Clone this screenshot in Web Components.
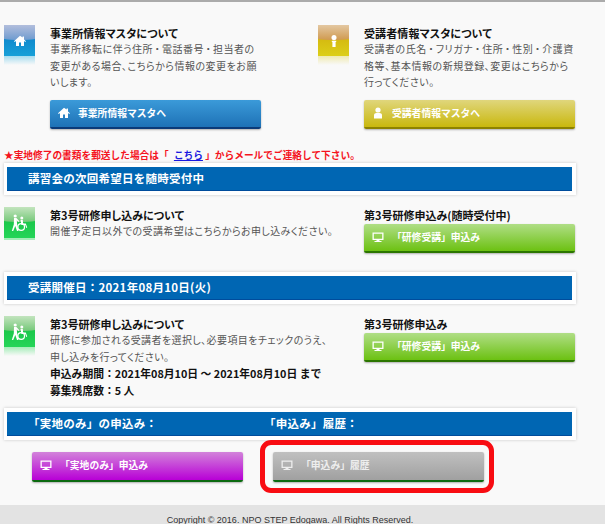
<!DOCTYPE html>
<html lang="ja">
<head>
<meta charset="utf-8">
<title>研修申込み</title>
<style>
html, body { margin: 0; overflow: hidden; height: 524px; }
body { background: #f9f9f9; font-family: "Noto Sans CJK JP", "Liberation Sans", sans-serif; }
</style>
</head>
<body>
<x-page>
  <x-masters>
    <x-info tile="blue" icon="home" heading="事業所情報マスタについて">
      事業所移転に伴う住所<i>・</i>電話番号<i>・</i>担当者の<br>変更がある場合、こちらから情報の変更をお願<br>いします。
      <x-btn slot="action" color="blue" icon="home">事業所情報マスタへ</x-btn>
    </x-info>
    <x-info tile="yellow" icon="figure" heading="受講者情報マスタについて">
      受講者の氏名<i>・</i>フリガナ<i>・</i>住所<i>・</i>性別<i>・</i>介護資<br>格等、基本情報の新規登録、変更はこちらから<br>行ってください。
      <x-btn slot="action" color="yellow" icon="person">受講者情報マスタへ</x-btn>
    </x-info>
  </x-masters>

  <x-notice>★実地修了の書類を郵送した場合は「 <a href="#">こちら</a> 」からメールでご連絡して下さい。</x-notice>

  <x-banner><span>講習会の次回希望日を随時受付中</span></x-banner>

  <x-course heading="第3号研修申し込みについて" short aside="第3号研修申込み(随時受付中)" style="height:65px">
    開催予定日以外での受講希望はこちらからお申し込みください。
  </x-course>

  <x-banner><span>受講開催日：2021年08月10日(火)</span></x-banner>

  <x-course heading="第3号研修申し込みについて" aside="第3号研修申込み" style="height:92px">
    研修に参加される受講者を選択し、必要項目をチェックのうえ、<br>申し込みを行ってください。
    <div slot="extra">申込み期間：2021年08月10日 ～ 2021年08月10日 まで</div>
    <div slot="extra">募集残席数：5 人</div>
  </x-course>

  <x-banner columns><span>「実地のみ」の申込み：</span><span>「申込み」履歴：</span></x-banner>

  <x-actions>
    <x-btn color="purple" icon="monitor">「実地のみ」申込み</x-btn>
    <x-highlight><x-btn color="gray" icon="monitor">「申込み」履歴</x-btn></x-highlight>
  </x-actions>

  <x-footer>Copyright © 2016. NPO STEP Edogawa. All Rights Reserved.</x-footer>
</x-page>

<script>
const ICONS = {
    home: '<path d="M6 .8 0 6.2l.8.9L2 6v5h3V7.6h2V11h3V6l1.200 1.100.8-.9-2-1.800V1.500H8.600v1.100z"/>',
    person: '<circle cx="6" cy="3" r="2.600"/><path d="M2 11.500V8.300C2 6.800 3.200 6 4.500 6h3C8.800 6 10 6.800 10 8.300v3.200z"/>',
    figure: '<ellipse cx="6" cy="2.600" rx="2.500" ry="2.600"/><path d="M3.800 5.800h4.400v1.200H7.600v6H4.400V7h-.6z"/>',
    monitor: '<path fill-rule="evenodd" d="M.5 1.500h11v7.500h-4v1h2v1h-7v-1h2v-1h-4zm1.300 1.300v4.900h8.400V2.800z"/>',
    wheelchair: '<circle cx="4.200" cy="2" r="1.600"/><path d="M3 4h2.400l3 3.200-.7.7-2-1.700.5 4.300L7.500 17H6L4.300 12 2.200 17H.8l2-6.500z"/><circle cx="10.800" cy="4" r="1.500"/><path d="M9.500 6h2.300l.3 3.600h2.700l1.400 4-1 .3-1-3h-3.800z"/><circle cx="10.200" cy="13" r="3.300" fill="none" stroke="#fff" stroke-width="1.200"/>'
};

const TILES = {
    blue: ['#b4bfdd', '#6f9bcf', '#0a78c4', '#17a0d8', '#a6dcef'],
    yellow: ['#e4c9a4', '#d09a50', '#cfa90a', '#dccf18', '#efeab0'],
    green: ['#c5e5c0', '#74c878', '#12bb3e', '#25d558', '#a5edb8']
};

const BUTTONS = {
    blue: ['#3b9ad9', '#1e72b6', '#0b3a78', '#fff'],
    yellow: ['#e0d67c', '#c9b80e', '#8d8200', '#fff'],
    green: ['#b0de86', '#6cc112', '#2c7600', '#fff'],
    purple: ['#d283da', '#b800d6', '#0b6a10', '#fff'],
    gray: ['#c0c0c0', '#a0a0a0', '#0b6a10', '#eee']
};

class XPage extends HTMLElement {
    constructor() {
        super();
        this.attachShadow({mode: 'open'}).innerHTML = `
            <style>
            :host { display: block; border-top: 2px solid #ababab; padding-top: 23px; }
            </style>
            <slot></slot>`;
    }
}

class XMasters extends HTMLElement {
    constructor() {
        super();
        this.attachShadow({mode: 'open'}).innerHTML = `
            <style>
            :host { display: grid; grid-template-columns: 314px 261px; padding-left: 4px; }
            </style>
            <slot></slot>`;
    }
}

class XTile extends HTMLElement {
    connectedCallback() {
        const c = TILES[this.getAttribute('color')];
        const icon = this.getAttribute('icon');
        const big = icon === 'wheelchair';
        this.attachShadow({mode: 'open'}).innerHTML = `
            <style>
            :host { display: block; width: 31px; flex: none; }
            .face {
                height: 31px;
                position: relative;
                overflow: hidden;
                background: linear-gradient(${c[2]}, ${c[3]});
                display: flex;
                align-items: center;
                justify-content: center;
            }
            .face::before {
                content: '';
                position: absolute;
                left: -8px;
                right: -8px;
                top: -16px;
                height: 31px;
                border-radius: 0 0 50% 50% / 0 0 14% 14%;
                background: linear-gradient(${c[0]} 50%, ${c[1]});
            }
            svg { position: relative; fill: #fff; }
            .mirror {
                height: ${this.hasAttribute('short') ? 2 : 9}px;
                background: linear-gradient(${c[4]}, ${this.hasAttribute('short') ? c[4] : 'rgba(255,255,255,0)'});
            }
            </style>
            <div class="face">
                <svg width="${big ? 17 : 12}" height="${big ? 17 : 12}" viewBox="0 0 ${big ? '17 17' : '12 12'}">${ICONS[icon]}</svg>
            </div>
            <div class="mirror"></div>`;
    }
}

class XInfo extends HTMLElement {
    connectedCallback() {
        this.attachShadow({mode: 'open'}).innerHTML = `
            <style>
            :host { display: flex; gap: 15px; }
            .text { width: 211px; }
            h3 { margin: 0; font-size: 11px; line-height: 16px; letter-spacing: .1px; color: #111; font-weight: 700; font-feature-settings: "palt"; }
            .body { font-size: 10px; line-height: 16.500px; letter-spacing: .5px; color: #555; margin-bottom: 9.500px; white-space: nowrap; font-feature-settings: "palt"; }
            ::slotted(i) { font-style: normal; margin: 0 1.750px; }
            </style>
            <x-tile color="${this.getAttribute('tile')}" icon="${this.getAttribute('icon')}"></x-tile>
            <div class="text">
                <h3>${this.getAttribute('heading')}</h3>
                <div class="body"><slot></slot></div>
                <slot name="action"></slot>
            </div>`;
    }
}

class XNotice extends HTMLElement {
    constructor() {
        super();
        this.attachShadow({mode: 'open'}).innerHTML = `
            <style>
            :host {
                display: block;
                margin: 18px 0 0 4px;
                font-size: 9.700px;
                line-height: 16px;
                font-weight: 700;
                color: #f5141e;
                white-space: nowrap;
            }
            ::slotted(a) { color: #1a1ae0; margin: 0 0 0 3px; }
            </style>
            <slot></slot>`;
    }
}

class XBanner extends HTMLElement {
    constructor() {
        super();
        this.attachShadow({mode: 'open'}).innerHTML = `
            <style>
            :host {
                display: block;
                width: 565px;
                margin-left: 4px;
                padding: 4px 4px 4px 3px;
                background: #fff;
                box-shadow: 0 0 3px rgba(0,0,0,.2);
            }
            .bar {
                display: grid;
                grid-template-columns: 236px 1fr;
                height: 23px;
                line-height: 23px;
                padding-left: 21px;
                background: #0066b3;
                border-bottom: 1px solid #004c9c;
                color: #fff;
                font-size: 11.500px;
                letter-spacing: .25px;
                font-weight: 700;
                white-space: nowrap;
            }
            :host(:not([columns])) .bar { grid-template-columns: 1fr; }
            </style>
            <div class="bar"><slot></slot></div>`;
    }
}

class XCourse extends HTMLElement {
    connectedCallback() {
        this.attachShadow({mode: 'open'}).innerHTML = `
            <style>
            :host { display: grid; grid-template-columns: 314px 211px; column-gap: 46px; padding: 12px 0 0 4px; box-sizing: content-box; }
            .main { display: flex; gap: 15px; }
            h3, h4 { margin: 0; font-size: 11px; line-height: 16px; color: #111; font-weight: 700; white-space: nowrap; font-feature-settings: "palt"; }
            h4 { margin-bottom: 1px; }
            .body { font-size: 10px; line-height: 16.500px; letter-spacing: .4px; color: #555; white-space: nowrap; font-feature-settings: "palt"; }
            .extra { font-size: 10.800px; line-height: 16.500px; font-weight: 700; color: #111; white-space: nowrap; }
            </style>
            <div class="main">
                <x-tile color="green" icon="wheelchair" ${this.hasAttribute('short') ? 'short' : ''}></x-tile>
                <div>
                    <h3>${this.getAttribute('heading')}</h3>
                    <div class="body"><slot></slot></div>
                    <div class="extra"><slot name="extra"></slot></div>
                </div>
            </div>
            <div>
                <h4>${this.getAttribute('aside')}</h4>
                <x-btn color="green" icon="monitor">「研修受講」申込み</x-btn>
            </div>`;
    }
}

class XBtn extends HTMLElement {
    connectedCallback() {
        const c = BUTTONS[this.getAttribute('color')];
        this.attachShadow({mode: 'open'}).innerHTML = `
            <style>
            :host {
                display: flex;
                align-items: center;
                box-sizing: border-box;
                width: 211px;
                height: 29px;
                padding: 0 0 2px 8px;
                border-radius: 2px;
                background: linear-gradient(${c[0]}, ${c[1]});
                border-bottom: 2px solid ${c[2]};
                box-shadow: 0 1px 2px rgba(0,0,0,.3);
                color: ${c[3]};
                font-size: 9.800px;
                font-weight: 700;
                cursor: pointer;
                white-space: nowrap;
            }
            svg { width: 12px; height: 12px; fill: currentColor; margin-right: 8px; flex: none; }
            </style>
            <svg viewBox="0 0 12 12">${ICONS[this.getAttribute('icon')]}</svg>
            <slot></slot>`;
    }
}

class XActions extends HTMLElement {
    constructor() {
        super();
        this.attachShadow({mode: 'open'}).innerHTML = `
            <style>
            :host { display: flex; gap: 30px; padding: 12px 0 0 32px; height: 30px; }
            ::slotted(x-btn) { height: 30px; }
            </style>
            <slot></slot>`;
    }
}

class XHighlight extends HTMLElement {
    constructor() {
        super();
        this.attachShadow({mode: 'open'}).innerHTML = `
            <style>
            :host { display: block; position: relative; }
            .frame {
                position: absolute;
                inset: -12px -10px -11px -13px;
                border: 5px solid #f80c12;
                border-radius: 11px;
                pointer-events: none;
            }
            ::slotted(x-btn) { height: 30px; }
            </style>
            <slot></slot>
            <div class="frame"></div>`;
    }
}

class XFooter extends HTMLElement {
    constructor() {
        super();
        this.attachShadow({mode: 'open'}).innerHTML = `
            <style>
            :host {
                display: block;
                margin-top: 23px;
                padding: 11px 25px 0 0;
                height: 8px;
                background: #e3e3e3;
                color: #333;
                font-family: "Liberation Sans", sans-serif;
                font-size: 9px;
                line-height: 8px;
                text-align: center;
            }
            </style>
            <slot></slot>`;
    }
}

customElements.define('x-page', XPage);
customElements.define('x-masters', XMasters);
customElements.define('x-tile', XTile);
customElements.define('x-info', XInfo);
customElements.define('x-notice', XNotice);
customElements.define('x-banner', XBanner);
customElements.define('x-course', XCourse);
customElements.define('x-btn', XBtn);
customElements.define('x-actions', XActions);
customElements.define('x-highlight', XHighlight);
customElements.define('x-footer', XFooter);
</script>
</body>
</html>
